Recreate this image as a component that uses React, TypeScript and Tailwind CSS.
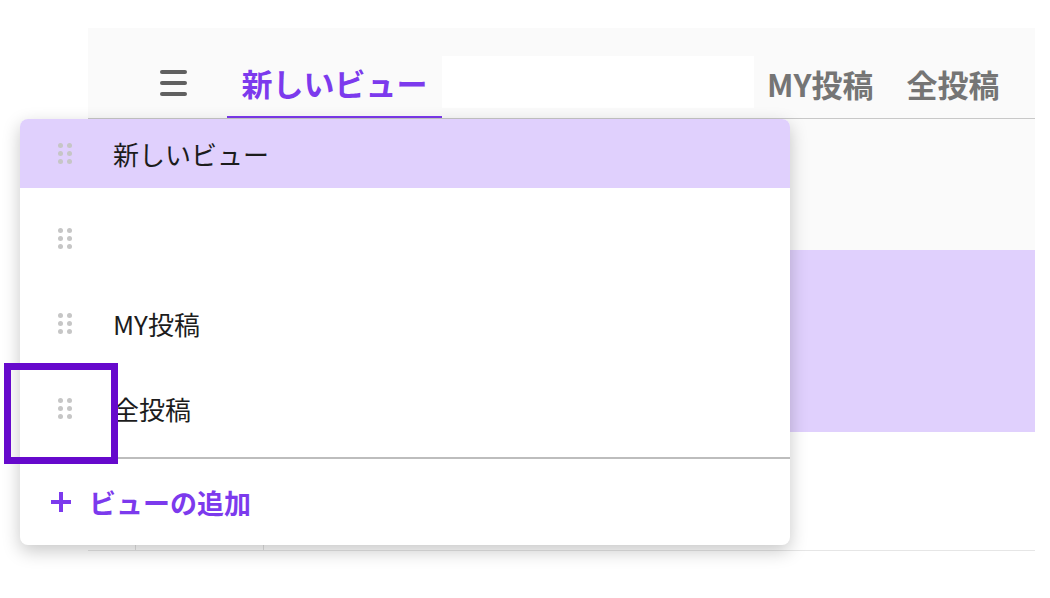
import React from 'react';

const FONT = { fontFamily: '"Noto Sans CJK JP", "Noto Sans", sans-serif' };

interface ViewItem {
  id: number;
  label: string;
}

const views: ViewItem[] = [
  { id: 1, label: '' },
  { id: 2, label: 'MY投稿' },
  { id: 3, label: '全投稿' },
];

const DragHandle = () => (
  <div className="grid grid-cols-2 gap-x-[3px] gap-y-[3px] w-[14px]">
    {[0, 1, 2, 3, 4, 5].map((i) => (
      <span key={i} className="block w-[5px] h-[5px] rounded-full bg-[#c6c6c6]" />
    ))}
  </div>
);

const Hamburger = () => (
  <div className="flex flex-col gap-[7px] w-[27px]">
    <span className="block h-[4px] rounded-sm bg-[#606060]" />
    <span className="block h-[4px] rounded-sm bg-[#606060]" />
    <span className="block h-[4px] rounded-sm bg-[#606060]" />
  </div>
);

export default function App() {
  return (
    <div className="relative w-[1050px] h-[598px] bg-white overflow-hidden" style={FONT}>
      {/* board panel */}
      <div className="ml-[88px] mt-[28px] w-[947px] bg-[#fafafa]">
        {/* tab header */}
        <div className="flex h-[91px] border-b border-[#c8c8c8]">
          <div className="flex items-center pt-[20px] ml-[72px]">
            <Hamburger />
          </div>
          <div className="ml-[40px] w-[215px] flex items-center justify-center pt-[20px] border-b-2 border-[#7c3aed]">
            <span className="text-[31px] font-bold text-[#7c3aed] leading-none">新しいビュー</span>
          </div>
          <div className="mt-[28px] w-[312px] h-[52px] bg-white" />
          <div className="ml-[13px] flex items-center gap-[33px] pt-[20px]">
            <span className="text-[31px] font-bold text-[#757575] leading-none">MY投稿</span>
            <span className="text-[31px] font-bold text-[#757575] leading-none">全投稿</span>
          </div>
        </div>

        {/* table body */}
        <div className="relative border-b border-[#e6e6e6]">
          <div className="h-[131px] bg-[#fafafa]" />
          <div className="h-[182px] bg-[#e0d0fd]" />
          <div className="h-[118px] bg-white" />
          <div className="absolute top-0 bottom-0 left-[47px] w-px bg-[#e2e2e2]" />
          <div className="absolute top-0 bottom-0 left-[175px] w-px bg-[#e2e2e2]" />
        </div>
      </div>

      {/* view switcher menu */}
      <div className="absolute left-[20px] top-[119px] w-[770px] h-[426px] bg-white rounded-lg overflow-hidden shadow-[0_6px_18px_rgba(0,0,0,0.22)]">
        <div className="flex items-center h-[69px] bg-[#e0d0fd] pl-[38px]">
          <DragHandle />
          <span className="ml-[41px] text-[26px] text-[#1c1c1c] leading-none">新しいビュー</span>
        </div>
        <div className="pt-[8px]">
          {views.map((v) => (
            <div key={v.id} className="flex items-center h-[85px] pl-[38px]">
              <DragHandle />
              <span className="ml-[41px] text-[26px] text-[#1c1c1c] leading-none">{v.label}</span>
            </div>
          ))}
        </div>
        <div className="mt-[6px] h-[2px] bg-[#bdbdbd]" />
        <div className="flex items-center h-[86px] pl-[30px]">
          <svg width="22" height="22" viewBox="0 0 22 22">
            <path d="M11 1v20M1 11h20" stroke="#7c3aed" strokeWidth="4" />
          </svg>
          <span className="ml-[17px] text-[27px] font-bold text-[#7c3aed] leading-none">ビューの追加</span>
        </div>
      </div>

      {/* focus frame around the drag handle */}
      <div className="absolute left-[4px] top-[363px] w-[114px] h-[101px] border-[7px] border-[#6609cc]" />
    </div>
  );
}
